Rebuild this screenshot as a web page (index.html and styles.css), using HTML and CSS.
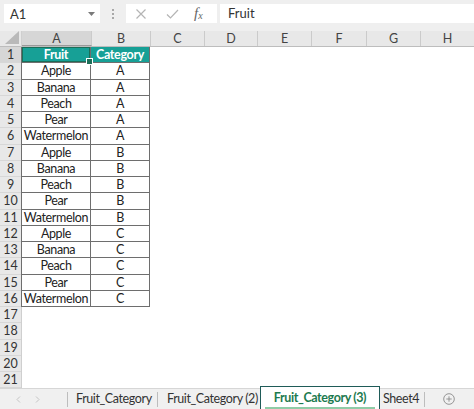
FILE: index.html
```html
<!DOCTYPE html>
<html>
<head>
<meta charset="utf-8">
<link rel="stylesheet" href="styles.css">
</head>
<body>
<div class="app">
  <div class="fbar">
    <div class="namebox"><span>A1</span><svg class="caret" width="7" height="4" viewBox="0 0 7 4"><path d="M0 0h7L3.5 4z" fill="#7a7a7a"/></svg></div>
    <div class="grip"><i></i><i></i><i></i></div>
    <div class="fbtns">
      <svg width="12" height="12" viewBox="0 0 12 12"><path d="M1.5 1.5l9 9M10.5 1.5l-9 9" stroke="#b4b4b4" stroke-width="1.2" fill="none"/></svg>
      <svg width="13" height="12" viewBox="0 0 13 12"><path d="M1 6.5l3.5 3.5L12 2" stroke="#b4b4b4" stroke-width="1.2" fill="none"/></svg>
      <span class="fx">f<sub>x</sub></span>
    </div>
    <div class="finput">Fruit</div>
  </div>
  <div class="sheet">
    <div class="corner"><svg width="14" height="13" viewBox="0 0 14 13"><path d="M14 0V13H0z" fill="#b9b9b9"/></svg></div>
    <div class="colheads">
      <div class="ch sel w70">A</div>
      <div class="ch w59">B</div>
      <div class="ch w54">C</div>
      <div class="ch w53">D</div>
      <div class="ch w54">E</div>
      <div class="ch w55">F</div>
      <div class="ch w54">G</div>
      <div class="ch last">H</div>
    </div>
    <div class="rowheads">
      <div class="rh sel">1</div><div class="rh">2</div><div class="rh">3</div><div class="rh">4</div><div class="rh">5</div><div class="rh">6</div><div class="rh">7</div><div class="rh">8</div><div class="rh">9</div><div class="rh">10</div><div class="rh">11</div><div class="rh">12</div><div class="rh">13</div><div class="rh">14</div><div class="rh">15</div><div class="rh">16</div><div class="rh">17</div><div class="rh">18</div><div class="rh">19</div><div class="rh">20</div><div class="rh">21</div>
    </div>
    <div class="cells">
      <div class="table">
        <div class="c a hd active">Fruit</div><div class="c b hd">Category</div>
        <div class="c a">Apple</div><div class="c b">A</div>
        <div class="c a">Banana</div><div class="c b">A</div>
        <div class="c a">Peach</div><div class="c b">A</div>
        <div class="c a">Pear</div><div class="c b">A</div>
        <div class="c a">Watermelon</div><div class="c b">A</div>
        <div class="c a">Apple</div><div class="c b">B</div>
        <div class="c a">Banana</div><div class="c b">B</div>
        <div class="c a">Peach</div><div class="c b">B</div>
        <div class="c a">Pear</div><div class="c b">B</div>
        <div class="c a">Watermelon</div><div class="c b">B</div>
        <div class="c a">Apple</div><div class="c b">C</div>
        <div class="c a">Banana</div><div class="c b">C</div>
        <div class="c a">Peach</div><div class="c b">C</div>
        <div class="c a">Pear</div><div class="c b">C</div>
        <div class="c a">Watermelon</div><div class="c b">C</div>
      </div>
    </div>
  </div>
  <div class="tabs">
    <div class="nav">
      <svg width="5" height="7" viewBox="0 0 5 7"><path d="M4 0.5L1 3.5l3 3" stroke="#c4c4c4" stroke-width="1" fill="none"/></svg>
      <svg width="5" height="7" viewBox="0 0 5 7"><path d="M1 0.5l3 3-3 3" stroke="#c4c4c4" stroke-width="1" fill="none"/></svg>
    </div>
    <div class="sep"></div>
    <div class="tab t1">Fruit_Category</div>
    <div class="sep"></div>
    <div class="tab t2">Fruit_Category (2)</div>
    <div class="tab active-tab"><span>Fruit_Category (3)</span></div>
    <div class="tab t4">Sheet4</div>
    <div class="sep"></div>
    <div class="add"><svg width="12" height="12" viewBox="0 0 12 12"><circle cx="6" cy="6" r="5.3" stroke="#8a8a8a" stroke-width="0.9" fill="none"/><path d="M6 3.3v5.4M3.3 6h5.4" stroke="#8a8a8a" stroke-width="0.9"/></svg></div>
  </div>
</div>
</body>
</html>
```

FILE: styles.css
```css
* { box-sizing: border-box; }
html, body { margin: 0; padding: 0; }
body {
  width: 474px;
  height: 409px;
  overflow: hidden;
  font-family: Lato, "Open Sans", sans-serif;
  color: #222;
  background: #fff;
}
.app { display: flex; flex-direction: column; height: 409px; }

.fbar {
  height: 31px;
  background: #efefef;
  display: flex;
  align-items: flex-start;
  padding: 4px 0 0 4px;
}
.namebox {
  width: 96px;
  height: 19px;
  background: #fff;
  display: flex;
  align-items: center;
  justify-content: space-between;
  padding: 0 5px 0 6px;
  font-size: 13px;
  color: #333;
}
.grip {
  width: 26px;
  height: 19px;
  display: flex;
  flex-direction: column;
  align-items: center;
  justify-content: center;
  gap: 2px;
}
.grip i { width: 2px; height: 2px; background: #a8a8a8; display: block; }
.fbtns {
  width: 91px;
  height: 19px;
  background: #fff;
  display: flex;
  align-items: center;
  padding: 0 0 0 9px;
}
.fbtns svg:nth-child(1) { margin-right: 19px; }
.fbtns svg:nth-child(2) { margin-right: 15px; }
.fx {
  font-family: "Liberation Serif", serif;
  font-style: italic;
  font-size: 15px;
  color: #666;
  line-height: 1;
}
.fx sub { font-size: 10px; vertical-align: -1px; }
.finput {
  flex: 1;
  height: 19px;
  margin-left: 3px;
  background: #fff;
  font-size: 13px;
  line-height: 19px;
  padding-left: 8px;
  color: #333;
}

.sheet {
  display: grid;
  grid-template-columns: 22px 1fr;
  grid-template-rows: 16px 1fr;
  height: 357px;
}
.corner {
  background: #e8e8e8;
  border-right: 1px solid #cfcfcf;
  border-bottom: 1px solid #bdbdbd;
  display: flex;
  align-items: flex-end;
  justify-content: flex-end;
  padding: 0 2px 2px 0;
}
.colheads {
  display: flex;
  background: #e8e8e8;
  border-bottom: 1px solid #bdbdbd;
}
.ch {
  font-size: 12.5px;
  color: #444;
  text-align: center;
  line-height: 15px;
  border-right: 1px solid #cbcbcb;
}
.ch.sel { background: #d6d6d6; border-bottom: 1px solid #9a9a9a; }
.w70 { width: 70px; }
.w59 { width: 59px; }
.w54 { width: 54px; }
.w53 { width: 53px; }
.w55 { width: 55px; }
.ch.last { flex: 1; border-right: 0; }

.rowheads {
  display: flex;
  flex-direction: column;
  background: #e8e8e8;
  border-right: 1px solid #cfcfcf;
}
.rh {
  height: 16.25px;
  font-size: 12.5px;
  color: #333;
  text-align: center;
  line-height: 16px;
  border-bottom: 1px solid #d7d7d7;
}
.rh.sel { background: #d6d6d6; }

.cells { background: #fff; }
.table {
  display: grid;
  grid-template-columns: 70px 59px;
  grid-auto-rows: 16.25px;
  margin-left: -1px;
}
.c {
  font-size: 12.5px;
  letter-spacing: -0.35px;
  text-align: center;
  line-height: 15px;
  color: #222;
  border-right: 1px solid #6e6e6e;
  border-bottom: 1px solid #6e6e6e;
  white-space: nowrap;
}
.c.a { border-left: 1px solid #6e6e6e; }
.c.hd {
  background: #17a096;
  color: #fff;
  font-weight: 700;
}
.c.active {
  position: relative;
  box-shadow: inset 0 0 0 1px #1b6e58;
}
.c.active::after {
  content: "";
  position: absolute;
  right: -3px;
  bottom: -3px;
  width: 5px;
  height: 5px;
  background: #1b6e58;
  border: 1px solid #fff;
}

.tabs {
  height: 21px;
  background: #f0f0f0;
  border-top: 1px solid #d6d6d6;
  display: flex;
  align-items: center;
  font-size: 12.5px;
  letter-spacing: -0.4px;
  color: #333;
}
.tabs > * { flex-shrink: 0; }
.nav {
  width: 67px;
  display: flex;
  padding-left: 16px;
  gap: 14px;
  align-items: center;
}
.sep { width: 1px; height: 15px; background: #bdbdbd; }
.tab { height: 21px; line-height: 20px; white-space: nowrap; }
.t1 { width: 89px; padding-left: 8px; }
.t2 { width: 102px; padding-left: 9px; }
.active-tab {
  width: 120px;
  height: 24px;
  margin-top: -3px;
  background: #fff;
  border: 1.5px solid #1f5b58;
  border-bottom: 0;
  color: #1d7a4f;
  font-weight: 700;
  padding: 0 4px;
  display: flex;
  flex-direction: column;
  align-items: center;
}
.active-tab span {
  line-height: 19px;
  padding-top: 1px;
  width: 100%;
  text-align: center;
  border-bottom: 3px solid #8fcca7;
}
.t4 { width: 44px; padding-left: 3px; }
.add { width: 48px; display: flex; justify-content: center; align-items: center; height: 21px; }
```
